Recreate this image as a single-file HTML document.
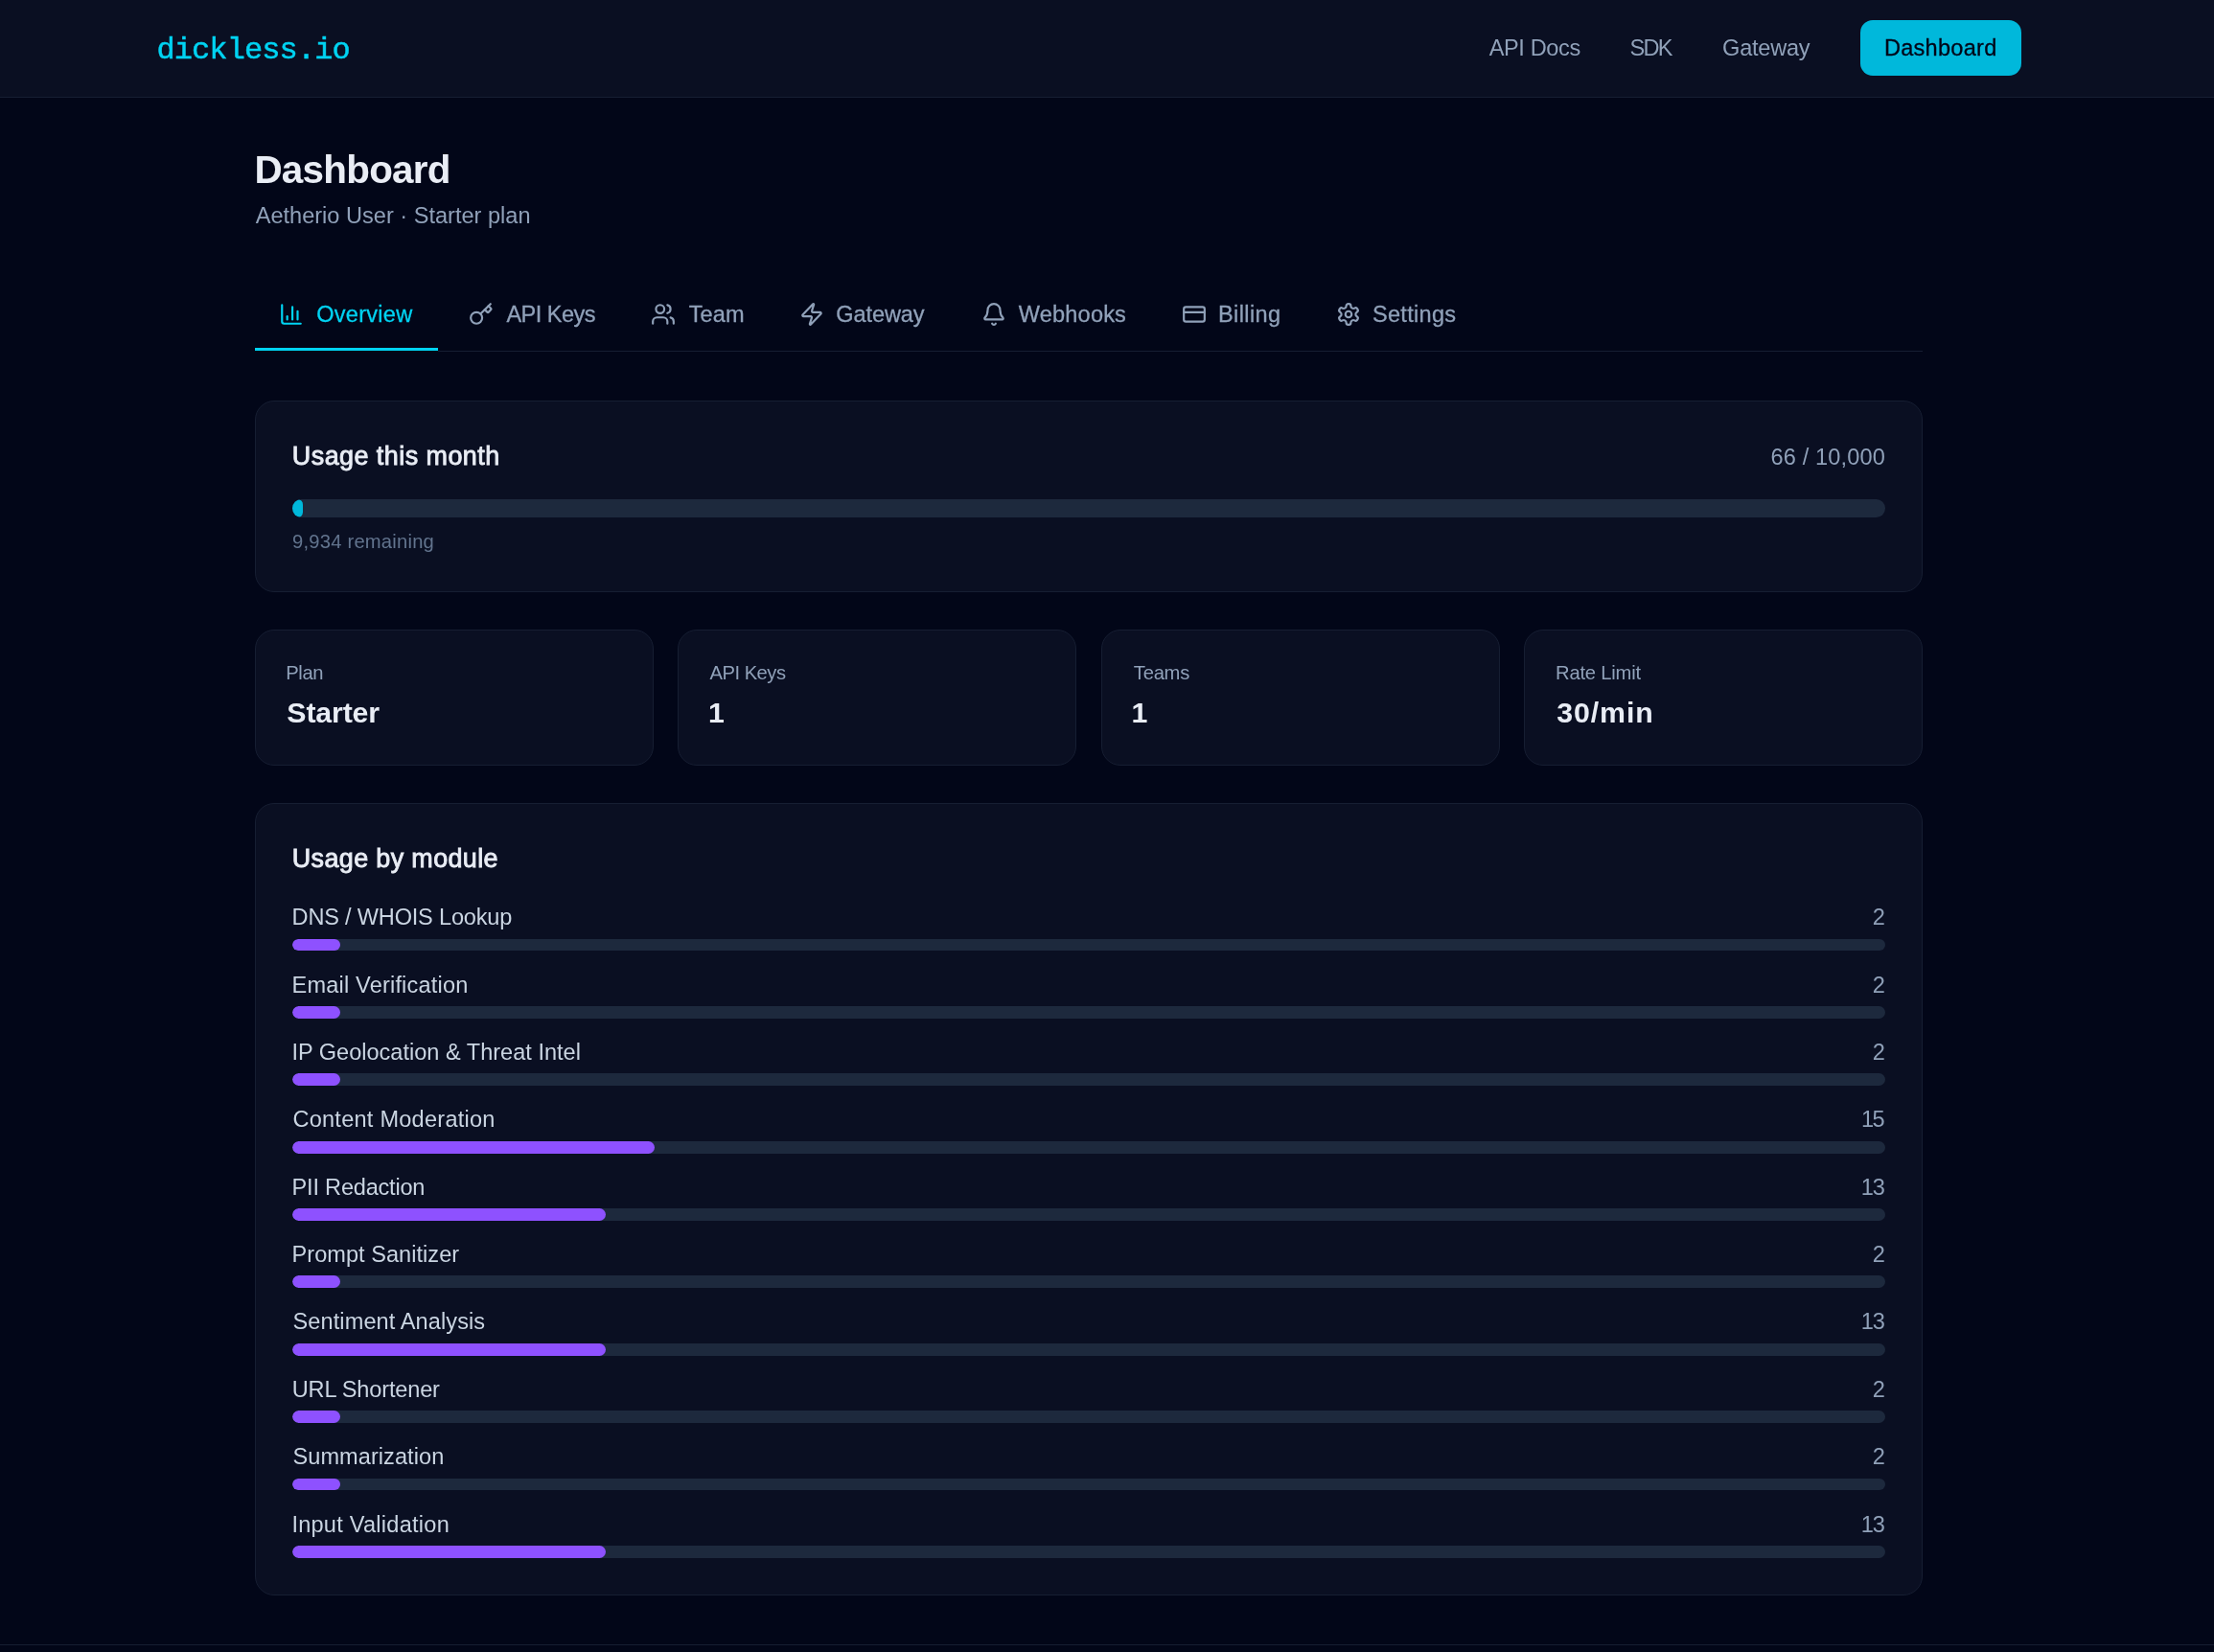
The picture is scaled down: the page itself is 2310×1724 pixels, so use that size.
<!DOCTYPE html>
<html lang="en">
<head>
<meta charset="utf-8">
<meta name="viewport" content="width=2310">
<title>Dashboard – dickless.io</title>
<style>
*{box-sizing:border-box;margin:0;padding:0}
html,body{width:2310px;height:1724px;overflow:hidden;background:#020618}
body{font-family:'Liberation Sans', sans-serif}
a{text-decoration:none;color:inherit}
ul{list-style:none}
/* every box is placed on the 2310x1724 canvas; wrappers stay unpositioned so coordinates are page-absolute */
#app{position:absolute;left:0;top:0;width:2310px;height:1724px;will-change:transform}
.t,.box,.bar,.fill,svg{position:absolute}
.t{white-space:nowrap;line-height:1;font-weight:normal}
.hdr{left:0;top:0;width:2310px;height:102px;background:#0a0f22;border-bottom:1px solid #161e32}
.btn{left:1941px;top:21px;width:168px;height:58px;border-radius:13px;background:#00b8db}
.tabline{left:457px;top:366px;width:1549px;height:1px;background:#161e32}
.tabact{left:266px;top:363px;width:191px;height:3px;background:#00d3f2}
.card{background:#0a0f22;border:1px solid #161e32;border-radius:20px}
.bar{left:305px;width:1662px;background:#1d293d;border-radius:99px;overflow:hidden}
.fill{left:0;top:0;height:100%;border-radius:99px;background:#8e51ff}
.foot{left:0;top:1716px;width:2310px;height:1px;background:#161e32}
svg{width:26px;height:26px;top:314.8px;fill:none;stroke:#90a1b9;stroke-width:2;stroke-linecap:round;stroke-linejoin:round}
</style>
</head>
<body>
<div id="app">
<header>
<div class="box hdr"></div>
<a class="t" href="#" style="left:163.4px;top:37px;font-size:32px;color:#00d3f2;font-family:'Liberation Mono', monospace;letter-spacing:-0.89px;-webkit-text-stroke:.5px #00d3f2">dickless.io</a>
<nav>
<a class="t" href="#" style="left:1553.7px;top:39px;font-size:23.56px;color:#90a1b9;letter-spacing:-0.37px">API Docs</a>
<a class="t" href="#" style="left:1700.5px;top:39px;font-size:23.56px;color:#90a1b9;letter-spacing:-1.7px">SDK</a>
<a class="t" href="#" style="left:1797.1px;top:39px;font-size:23.56px;color:#90a1b9;letter-spacing:-0.24px">Gateway</a>
<div class="box btn"></div>
<a class="t" href="#" style="left:1965.9px;top:39px;font-size:23.56px;color:#020618;letter-spacing:0.28px;-webkit-text-stroke:.3px #020618">Dashboard</a>
</nav>
</header>
<main>
<h1 class="t" style="left:265.38px;top:157px;font-size:40.39px;color:#e9edf5;font-weight:bold;letter-spacing:-0.72px">Dashboard</h1>
<p class="t" style="left:266.7px;top:214px;font-size:23.56px;color:#90a1b9;letter-spacing:0.01px">Aetherio User · Starter plan</p>
<nav class="tabs">
<div class="box tabline"></div>
<div class="box tabact"></div>
<a href="#"><svg viewBox="0 0 24 24" style="left:290.5px;stroke:#00d3f2"><path d="M3 3v16a2 2 0 0 0 2 2h16"/><path d="M18 17V9"/><path d="M13 17V5"/><path d="M8 17v-3"/></svg><span class="t" style="left:330.2px;top:317px;font-size:23.56px;color:#00d3f2;letter-spacing:0.27px;-webkit-text-stroke:.3px #00d3f2">Overview</span></a>
<a href="#"><svg viewBox="0 0 24 24" style="left:488.9px"><path d="m15.5 7.5 2.3 2.3a1 1 0 0 0 1.4 0l2.1-2.1a1 1 0 0 0 0-1.4L19 4"/><path d="m21 2-9.6 9.6"/><circle cx="7.5" cy="15.5" r="5.5"/></svg><span class="t" style="left:528.4px;top:317px;font-size:23.56px;color:#90a1b9;letter-spacing:-0.52px;-webkit-text-stroke:.3px #90a1b9">API Keys</span></a>
<a href="#"><svg viewBox="0 0 24 24" style="left:678.9px"><path d="M16 21v-2a4 4 0 0 0-4-4H6a4 4 0 0 0-4 4v2"/><circle cx="9" cy="7" r="4"/><path d="M22 21v-2a4 4 0 0 0-3-3.87"/><path d="M16 3.13a4 4 0 0 1 0 7.75"/></svg><span class="t" style="left:718.65px;top:317px;font-size:23.56px;color:#90a1b9;letter-spacing:0.13px;-webkit-text-stroke:.3px #90a1b9">Team</span></a>
<a href="#"><svg viewBox="0 0 24 24" style="left:833.5px"><path d="M4 14a1 1 0 0 1-.78-1.63l9.9-10.2a.5.5 0 0 1 .86.46l-1.92 6.02A1 1 0 0 0 13 10h7a1 1 0 0 1 .78 1.63l-9.9 10.2a.5.5 0 0 1-.86-.46l1.92-6.02A1 1 0 0 0 11 14z"/></svg><span class="t" style="left:872.3px;top:317px;font-size:23.56px;color:#90a1b9;letter-spacing:-0.11px;-webkit-text-stroke:.3px #90a1b9">Gateway</span></a>
<a href="#"><svg viewBox="0 0 24 24" style="left:1023.7px"><path d="M10.268 21a2 2 0 0 0 3.464 0"/><path d="M3.262 15.326A1 1 0 0 0 4 17h16a1 1 0 0 0 .74-1.673C19.41 13.956 18 12.499 18 8A6 6 0 0 0 6 8c0 4.499-1.411 5.956-2.738 7.326"/></svg><span class="t" style="left:1062.8px;top:317px;font-size:23.56px;color:#90a1b9;letter-spacing:0.18px;-webkit-text-stroke:.3px #90a1b9">Webhooks</span></a>
<a href="#"><svg viewBox="0 0 24 24" style="left:1232.9px"><rect width="20" height="14" x="2" y="5" rx="2"/><line x1="2" x2="22" y1="10" y2="10"/></svg><span class="t" style="left:1271px;top:317px;font-size:23.56px;color:#90a1b9;letter-spacing:0.38px;-webkit-text-stroke:.3px #90a1b9">Billing</span></a>
<a href="#"><svg viewBox="0 0 24 24" style="left:1393.5px"><path d="M12.22 2h-.44a2 2 0 0 0-2 2v.18a2 2 0 0 1-1 1.73l-.43.25a2 2 0 0 1-2 0l-.15-.08a2 2 0 0 0-2.73.73l-.22.38a2 2 0 0 0 .73 2.73l.15.1a2 2 0 0 1 1 1.72v.51a2 2 0 0 1-1 1.74l-.15.09a2 2 0 0 0-.73 2.73l.22.38a2 2 0 0 0 2.73.73l.15-.08a2 2 0 0 1 2 0l.43.25a2 2 0 0 1 1 1.73V20a2 2 0 0 0 2 2h.44a2 2 0 0 0 2-2v-.18a2 2 0 0 1 1-1.73l.43-.25a2 2 0 0 1 2 0l.15.08a2 2 0 0 0 2.73-.73l.22-.39a2 2 0 0 0-.73-2.73l-.15-.08a2 2 0 0 1-1-1.74v-.5a2 2 0 0 1 1-1.74l.15-.09a2 2 0 0 0 .73-2.73l-.22-.38a2 2 0 0 0-2.73-.73l-.15.08a2 2 0 0 1-2 0l-.43-.25a2 2 0 0 1-1-1.73V4a2 2 0 0 0-2-2z"/><circle cx="12" cy="12" r="3"/></svg><span class="t" style="left:1431.9px;top:317px;font-size:23.56px;color:#90a1b9;letter-spacing:0.31px;-webkit-text-stroke:.3px #90a1b9">Settings</span></a>
</nav>
<section>
<div class="box card" style="left:266px;top:418px;width:1740px;height:200px"></div>
<h2 class="t" style="left:304.82px;top:463px;font-size:26.93px;color:#e9edf5;letter-spacing:0.46px;-webkit-text-stroke:.85px #e9edf5">Usage this month</h2>
<span class="t" style="left:1847.4px;top:466px;font-size:23.56px;color:#90a1b9;letter-spacing:0.17px">66 / 10,000</span>
<div class="bar" style="top:521px;height:19px"><div class="fill" style="width:11px;background:#00b8db"></div></div>
<p class="t" style="left:305px;top:555px;font-size:20.2px;color:#62748e;letter-spacing:0.22px">9,934 remaining</p>
</section>
<section>
<article><div class="box card" style="left:266px;top:657px;width:416px;height:142px"></div><p class="t" style="left:298.2px;top:692px;font-size:20.2px;color:#90a1b9;letter-spacing:-0.36px">Plan</p><p class="t" style="left:299.33px;top:729px;font-size:30.29px;color:#e9edf5;font-weight:bold;letter-spacing:-0.15px">Starter</p></article>
<article><div class="box card" style="left:707px;top:657px;width:416px;height:142px"></div><p class="t" style="left:740.6px;top:692px;font-size:20.2px;color:#90a1b9;letter-spacing:-0.52px">API Keys</p><p class="t" style="left:739.01px;top:729px;font-size:30.29px;color:#e9edf5;font-weight:bold">1</p></article>
<article><div class="box card" style="left:1149px;top:657px;width:416px;height:142px"></div><p class="t" style="left:1182.8px;top:692px;font-size:20.2px;color:#90a1b9;letter-spacing:-0.24px">Teams</p><p class="t" style="left:1180.61px;top:729px;font-size:30.29px;color:#e9edf5;font-weight:bold">1</p></article>
<article><div class="box card" style="left:1590px;top:657px;width:416px;height:142px"></div><p class="t" style="left:1623px;top:692px;font-size:20.2px;color:#90a1b9;letter-spacing:-0.2px">Rate Limit</p><p class="t" style="left:1624.33px;top:729px;font-size:30.29px;color:#e9edf5;font-weight:bold;letter-spacing:0.9px">30/min</p></article>
</section>
<section>
<div class="box card" style="left:266px;top:838px;width:1740px;height:827px"></div>
<h2 class="t" style="left:304.82px;top:883px;font-size:26.93px;color:#e9edf5;letter-spacing:0.37px;-webkit-text-stroke:.85px #e9edf5">Usage by module</h2>
<ul>
<li><span class="t" style="left:304.6px;top:946px;font-size:23.56px;color:#cad5e2;letter-spacing:-0.19px">DNS / WHOIS Lookup</span><span class="t" style="left:1953.79px;top:946px;font-size:23.56px;color:#90a1b9">2</span><div class="bar" style="top:980px;height:12px"><div class="fill" style="width:50.36px"></div></div></li>
<li><span class="t" style="left:304.6px;top:1017px;font-size:23.56px;color:#cad5e2;letter-spacing:0.18px">Email Verification</span><span class="t" style="left:1953.79px;top:1017px;font-size:23.56px;color:#90a1b9">2</span><div class="bar" style="top:1050px;height:13px"><div class="fill" style="width:50.36px"></div></div></li>
<li><span class="t" style="left:304.4px;top:1087px;font-size:23.56px;color:#cad5e2">IP Geolocation &amp; Threat Intel</span><span class="t" style="left:1953.79px;top:1087px;font-size:23.56px;color:#90a1b9">2</span><div class="bar" style="top:1120px;height:13px"><div class="fill" style="width:50.36px"></div></div></li>
<li><span class="t" style="left:305.4px;top:1157px;font-size:23.56px;color:#cad5e2;letter-spacing:0.25px">Content Moderation</span><span class="t" style="left:1941.9px;top:1157px;font-size:23.56px;color:#90a1b9;letter-spacing:-1.4px">15</span><div class="bar" style="top:1191px;height:13px"><div class="fill" style="width:377.73px"></div></div></li>
<li><span class="t" style="left:304.6px;top:1228px;font-size:23.56px;color:#cad5e2;letter-spacing:-0.21px">PII Redaction</span><span class="t" style="left:1941.7px;top:1228px;font-size:23.56px;color:#90a1b9;letter-spacing:-1.1px">13</span><div class="bar" style="top:1261px;height:13px"><div class="fill" style="width:327.36px"></div></div></li>
<li><span class="t" style="left:304.6px;top:1298px;font-size:23.56px;color:#cad5e2;letter-spacing:0.03px">Prompt Sanitizer</span><span class="t" style="left:1953.79px;top:1298px;font-size:23.56px;color:#90a1b9">2</span><div class="bar" style="top:1331px;height:13px"><div class="fill" style="width:50.36px"></div></div></li>
<li><span class="t" style="left:305.5px;top:1368px;font-size:23.56px;color:#cad5e2;letter-spacing:0.1px">Sentiment Analysis</span><span class="t" style="left:1941.7px;top:1368px;font-size:23.56px;color:#90a1b9;letter-spacing:-1.1px">13</span><div class="bar" style="top:1402px;height:13px"><div class="fill" style="width:327.36px"></div></div></li>
<li><span class="t" style="left:304.7px;top:1439px;font-size:23.56px;color:#cad5e2;letter-spacing:-0.16px">URL Shortener</span><span class="t" style="left:1953.79px;top:1439px;font-size:23.56px;color:#90a1b9">2</span><div class="bar" style="top:1472px;height:13px"><div class="fill" style="width:50.36px"></div></div></li>
<li><span class="t" style="left:305.5px;top:1509px;font-size:23.56px;color:#cad5e2;letter-spacing:0.06px">Summarization</span><span class="t" style="left:1953.79px;top:1509px;font-size:23.56px;color:#90a1b9">2</span><div class="bar" style="top:1543px;height:12px"><div class="fill" style="width:50.36px"></div></div></li>
<li><span class="t" style="left:304.4px;top:1580px;font-size:23.56px;color:#cad5e2;letter-spacing:0.25px">Input Validation</span><span class="t" style="left:1941.7px;top:1580px;font-size:23.56px;color:#90a1b9;letter-spacing:-1.1px">13</span><div class="bar" style="top:1613px;height:13px"><div class="fill" style="width:327.36px"></div></div></li>
</ul>
</section>
</main>
<footer><div class="box foot"></div></footer>
</div>
</body>
</html>
